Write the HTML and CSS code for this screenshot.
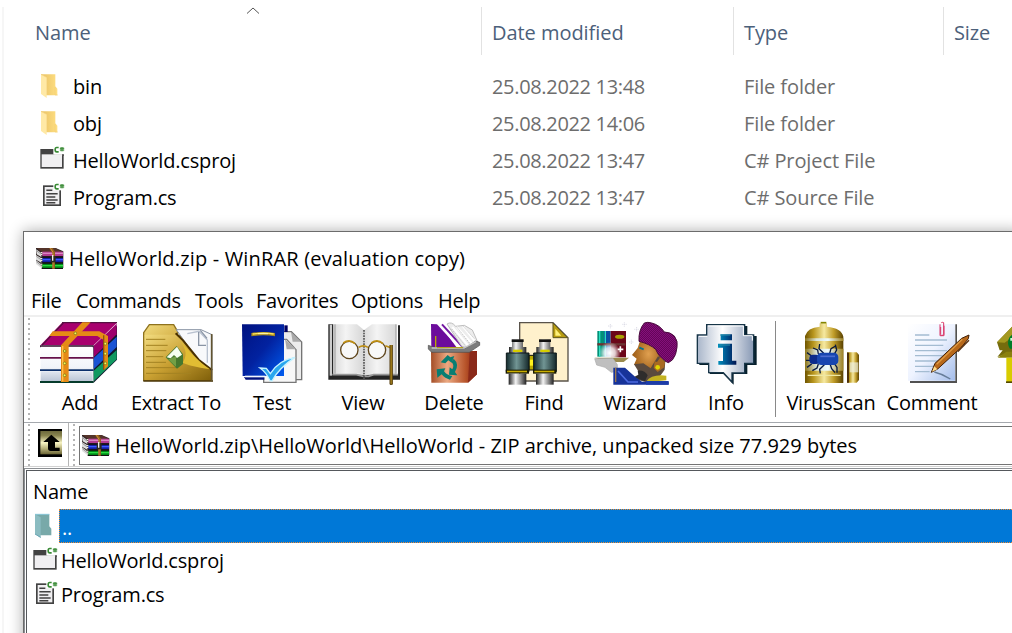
FILE: index.html
```html
<!DOCTYPE html>
<html lang="en">
<head>
<meta charset="utf-8">
<title>HelloWorld.zip - WinRAR</title>
<link rel="stylesheet" href="styles.css">
</head>
<body>
<svg class="defs" width="0" height="0">
  <defs>
    <linearGradient id="gFold" x1="0" x2="1"><stop offset="0" stop-color="#e8c165"/><stop offset="1" stop-color="#ffdf82"/></linearGradient>
    <linearGradient id="gPage" x1="0" y1="0" x2="0" y2="1"><stop offset="0" stop-color="#fff"/><stop offset=".6" stop-color="#f1f4fa"/><stop offset="1" stop-color="#bcc6d6"/></linearGradient>
    <linearGradient id="gGold" x1="0" y1="0" x2="1" y2="1"><stop offset="0" stop-color="#f2dc80"/><stop offset=".5" stop-color="#c9a032"/><stop offset="1" stop-color="#80600a"/></linearGradient>
    <linearGradient id="gBlue" x1="0" y1="0" x2="1" y2="1"><stop offset="0" stop-color="#001280"/><stop offset=".5" stop-color="#0222a0"/><stop offset="1" stop-color="#005cf0"/></linearGradient>
    <linearGradient id="gPaperL" x1="0" x2="1"><stop offset="0" stop-color="#dadada"/><stop offset=".4" stop-color="#f4f4f4"/><stop offset="1" stop-color="#d6d6d6"/></linearGradient>
    <linearGradient id="gBin" x1="0" x2="1"><stop offset="0" stop-color="#a44d26"/><stop offset=".35" stop-color="#eba982"/><stop offset=".75" stop-color="#b8552b"/><stop offset="1" stop-color="#861a0a"/></linearGradient>
    <linearGradient id="gSteel" x1="0" x2="1"><stop offset="0" stop-color="#222"/><stop offset=".4" stop-color="#f4f4f4"/><stop offset="1" stop-color="#222"/></linearGradient>
    <linearGradient id="gTeal" x1="0" x2="1"><stop offset="0" stop-color="#142b2e"/><stop offset=".45" stop-color="#719594"/><stop offset="1" stop-color="#15292b"/></linearGradient>
    <linearGradient id="gCan" x1="0" x2="1"><stop offset="0" stop-color="#6f5500"/><stop offset=".22" stop-color="#b8961e"/><stop offset=".5" stop-color="#f6e9a0"/><stop offset=".75" stop-color="#c09c28"/><stop offset="1" stop-color="#594100"/></linearGradient>
    <linearGradient id="gCanLight" x1="0" x2="1"><stop offset="0" stop-color="#8d761c"/><stop offset=".3" stop-color="#d9e4d9"/><stop offset=".6" stop-color="#eefcff"/><stop offset="1" stop-color="#9d8122"/></linearGradient>
    <linearGradient id="gInfo" x1="0" x2="1"><stop offset="0" stop-color="#a9b6ca"/><stop offset=".45" stop-color="#fff"/><stop offset="1" stop-color="#8899b5"/></linearGradient>
    <linearGradient id="gNote" x1="0" y1="0" x2="1" y2="1"><stop offset="0" stop-color="#fff"/><stop offset=".5" stop-color="#eef3ff"/><stop offset="1" stop-color="#a4bdea"/></linearGradient>
    <linearGradient id="gI" x1="0" x2="1"><stop offset="0" stop-color="#0090bc"/><stop offset=".5" stop-color="#00508c"/><stop offset="1" stop-color="#001450"/></linearGradient>
    <radialGradient id="gFace"><stop offset="0" stop-color="#e0a050"/><stop offset="1" stop-color="#9a5a14"/></radialGradient>
    <radialGradient id="gGlow"><stop offset="0" stop-color="#fff"/><stop offset=".5" stop-color="#fff" stop-opacity=".8"/><stop offset="1" stop-color="#fff" stop-opacity="0"/></radialGradient>
    <pattern id="weave" width="6" height="6" patternUnits="userSpaceOnUse"><rect width="6" height="6" fill="#85107a"/><path d="M0 0h3v3H0zM3 3h3v3H3z" fill="#65045a"/></pattern>
    <linearGradient id="gUp" x1="0" y1="0" x2="0" y2="1"><stop offset="0" stop-color="#6c683c"/><stop offset=".2" stop-color="#89844f"/><stop offset=".5" stop-color="#f8f4c4"/><stop offset=".75" stop-color="#b8b27c"/><stop offset="1" stop-color="#6a6434"/></linearGradient>
  </defs>
  <symbol id="folder" viewBox="0 0 54 78">
    <path d="M3 4h43v36l6 7v20H18L3 60z" fill="url(#gFold)"/>
    <path d="M3 4l17 9v62L3 63z" fill="#ffe9a6"/><path d="M3 4l17 9" stroke="#f3cf77" stroke-width="2"/><path d="M45 42v24h8" fill="none" stroke="#f3cf77" stroke-width="2"/>
  </symbol>
  <symbol id="folder-teal" viewBox="0 0 54 78">
    <path d="M3 4h43v36l6 7v20H18L3 60z" fill="#78a9a9"/><path d="M3 4l17 9v62L3 63z" fill="#8bbcc1"/><path d="M3 4h43" stroke="#87c6d8" stroke-width="3"/><path d="M3 63l17 10" stroke="#6ba6b5" stroke-width="3"/>
  </symbol>
  <symbol id="csharp" viewBox="0 0 32 22">
    <path d="M14 4.5H8Q3.5 4.500 3.500 11Q3.500 17.500 8 17.500H14" fill="none" stroke="#388a34" stroke-width="5"/>
    <path d="M21.500 3v13M26.500 3v13M17.500 7h13.500M17.500 12h13.500" stroke="#388a34" stroke-width="3"/>
  </symbol>
  <symbol id="proj" viewBox="0 0 78 72">
    <path d="M1 9h70v59H1z" fill="#424242"/><path d="M5 25h61v38H5z" fill="#f0eff1"/><path d="M40 0h38v25H40z" fill="#fff"/><path d="M43 25h24v4H43z" fill="#f0eff1"/><path d="M67 25h4v5h-4z" fill="#424242"/>
    <use href="#csharp" x="42" y="0" width="32" height="22"/>
  </symbol>
  <symbol id="source" viewBox="0 0 78 72">
    <path d="M9 7h54v62H9z" fill="#424242"/><path d="M14 12h44v52H14z" fill="#f0eff1"/><path d="M40 0h38v22H40z" fill="#fff"/>
    <path d="M19 22h18M19 32h34M19 42h27M19 51h34M19 59h27" stroke="#424242" stroke-width="4.5"/>
    <use href="#csharp" x="42" y="0" width="32" height="22"/>
  </symbol>
  <symbol id="books" viewBox="0 0 87 66">
    <path d="M3 3h59l23 10v50H22L3 45z" fill="#302525"/>
    <path d="M5 3h56l22 13H22z" fill="#54342a"/><path d="M22 14h62v14H22z" fill="#b23c91"/><path d="M22 17h62v4H22z" fill="#d986c0"/>
    <path d="M22 32h62v14H22z" fill="#1420a5"/><path d="M22 36h62v4H22z" fill="#3b5bff"/><path d="M22 49h62v14H22z" fill="#008616"/><path d="M22 54h62v4H22z" fill="#29dc41"/>
    <path d="M3 7l16 11v12L5 22zM3 24l16 10v13L3 38zM3 40l16 12v11L3 51z" fill="#ddd"/><path d="M4 11l15 11M4 28l15 11M4 44l15 12" stroke="#797979" stroke-width="2"/>
    <path d="M22 28h62v4H22zM22 46h62v4H22zM20 63h64v3H20z" fill="#111"/>
    <path d="M42 3h11l7 12v50h-8V17z" fill="#94601b"/><path d="M46 3l8 13v49" fill="none" stroke="#e3a34e" stroke-width="2"/>
    <path d="M47 27h15v19H47z" fill="#2c2920"/><path d="M53 24v17" stroke="#eee" stroke-width="4"/><path d="M20 15v12M20 33v11M20 50v11" stroke="#f2f2e0" stroke-width="4" stroke-dasharray="3 3"/>
  </symbol>
</svg>

<main class="screen">
  <section class="explorer">
    <svg class="sort" viewBox="0 0 14 8"><path d="M1 6.5L7 1L13 6.5" fill="none" stroke="#555" stroke-width="1"/></svg>
    <div class="cols head"><span>Name</span><span class="w-dm">Date modified</span><span>Type</span><span>Size</span></div>
    <div class="cols row"><span class="file"><svg class="fi"><use href="#folder" width="18" height="26"/></svg>bin</span><span class="date">25.08.2022 13:48</span><span>File folder</span></div>
    <div class="cols row"><span class="file"><svg class="fi"><use href="#folder" width="18" height="26"/></svg>obj</span><span class="date">25.08.2022 14:06</span><span>File folder</span></div>
    <div class="cols row"><span class="file"><svg class="pi"><use href="#proj" width="26" height="24"/></svg>HelloWorld.csproj</span><span class="date">25.08.2022 13:47</span><span>C# Project File</span></div>
    <div class="cols row"><span class="file"><svg class="pi"><use href="#source" width="26" height="24"/></svg>Program.cs</span><span class="date">25.08.2022 13:47</span><span>C# Source File</span></div>
  </section>

  <section class="window">
    <header class="title"><svg class="bk"><use href="#books" width="29" height="22"/></svg><span>HelloWorld.zip - WinRAR (evaluation copy)</span></header>
    <nav class="menu"><span>File</span><span>Commands</span><span>Tools</span><span>Favorites</span><span>Options</span><span>Help</span></nav>
    <div class="toolbar">
      <i class="grip"></i>
      <div class="tool t90"><svg viewBox="45 27 270 192">
        <path d="M220 104L291 41v102l-70 69z" fill="#11172c"/>
        <path d="M221 101L290 35v32l-69 69z" fill="#9c006c"/><path d="M221 138L290 74v31l-69 67z" fill="#1953d4"/><path d="M221 176L290 114v28l-69 66z" fill="#109960"/>
        <path d="M62 99L126 32h165l-70 68z" fill="#a8006e"/><path d="M60 100h161v6H60z" fill="#2d0c2b"/>
        <path d="M62 104h156v31H62zM62 141h156v31H62zM62 178h156v29H62z" fill="url(#gPage)"/>
        <path d="M60 135h161v5H60z" fill="#65104b"/><path d="M60 172h161v5H60z" fill="#0d306b"/><path d="M60 207h161v6H60z" fill="#063b2b"/>
        <path d="M66 100L130 33M126 32h165" stroke="#551042" stroke-width="4" fill="none"/>
        <path d="M123 100L187 31h25l-66 69v110h-23z" fill="#e58b16"/><path d="M98 58h140l26 14v91l-13 12V84l-19-12H88z" fill="#e58b16"/><path d="M128 102v106" stroke="#ffc14b" stroke-width="4"/>
        <path d="M251 70v104" stroke="#8e5110" stroke-width="4"/><g fill="#fff35b" stroke="#64720d" stroke-width="2"><circle cx="134" cy="117" r="4"/><circle cx="134" cy="154" r="4"/><circle cx="134" cy="190" r="4"/><circle cx="166" cy="64" r="4"/><circle cx="256" cy="95" r="4"/><circle cx="256" cy="125" r="4"/><circle cx="256" cy="154" r="4"/></g>
      </svg><span>Add</span></div>
      <div class="tool t102"><svg viewBox="315 27 306 192">
        <path d="M371 205V62l17-24h73l12 20v14h46l56 100v33z" fill="url(#gGold)" stroke="#8e721e" stroke-width="4"/>
        <path d="M469 53h74l33 15v107l-45-34z" fill="#f8f9fb" stroke="#8994a4" stroke-width="3"/><path d="M502 65l35-7 25 26v68" fill="none" stroke="#b9c2d0" stroke-width="4"/><path d="M536 60v40h22M541 55l20 24" fill="none" stroke="#8994a4" stroke-width="4"/>
        <path d="M374 68h94l24 22 20 32 22 22 40 31v29H374z" fill="url(#gGold)"/>
        <path d="M378 82h58M378 100h65M378 116h61M378 134h52M378 151h60M378 167h92M378 184h135" stroke="#a38222" stroke-width="3"/>
        <path d="M467 64l22 21 25 31 22 27 40 31" fill="none" stroke="#493000" stroke-width="6"/><path d="M474 79c20 25 32 45 14 73 31 13 57 15 82 20-35-22-65-58-96-93z" fill="#e1bd33"/>
        <path d="M437 136l33-34 19 25v29l-18 14z" fill="#46782e"/><path d="M440 136l31-32 15 24-15 10-9-9-10 10z" fill="#f6fff0"/><path d="M444 142l24-9v31z" fill="#729f45"/><path d="M370 207h209" stroke="#483407" stroke-width="5"/><path d="M575 66v142" stroke="#625431" stroke-width="5"/>
      </svg><span class="w-ex">Extract To</span></div>
      <div class="tool t90"><svg viewBox="-9 27 270 192">
        <path d="M140 59h44l31 31v113h-45z" fill="#ececec" stroke="#747474" stroke-width="4"/><path d="M101 82h69l28 31v98h-97z" fill="#f7f7f7" stroke="#777" stroke-width="4"/><path d="M165 82l5 30h28zM183 60l5 29h25z" fill="#aaa"/>
        <path d="M36 37h126v155H38z" fill="url(#gBlue)"/><path d="M163 40h10v20h-10z" fill="#000062"/><path d="M42 195h61v8H47z" fill="#00107a"/><path d="M45 191h61v5H45z" fill="#f1f7ff"/>
        <path d="M64 63q35-6 71 0v10q-35-6-71 0z" fill="#a88a20"/><path d="M68 66q33-5 63 0" fill="none" stroke="#ffe65a" stroke-width="4"/><path d="M84 65h30" stroke="#fff8b2" stroke-width="3"/>
        <path d="M90 168l19 1 12 16c14-23 37-43 74-49-29 19-53 40-69 71l-6-1c-8-17-17-29-30-38z" fill="#28a6ee" stroke="#c5f2ff" stroke-width="4"/>
      </svg><span>Test</span></div>
      <div class="tool t92"><svg viewBox="261 27 276 192">
        <path d="M295 37h15v151h200v15H295zM504 40h6v156h-6z" fill="#242424"/><path d="M299 38h7v153h-7z" fill="#ccc"/>
        <path d="M311 37h70l21 17v135l-12-4h-79z" fill="url(#gPaperL)"/><path d="M402 54l24-17h73v149h-77l-20 6z" fill="url(#gPaperL)"/><path d="M307 188h72l21 5h16l15-5h73" fill="none" stroke="#999" stroke-width="5"/><path d="M402 54v151" stroke="#555" stroke-width="5" stroke-dasharray="5 3"/>
        <path d="M315 37v148M498 37v148" stroke="#999" stroke-width="3"/>
        <circle cx="358" cy="114" r="26" fill="#f8f8f8" stroke="#5f461d" stroke-width="4"/><circle cx="441" cy="114" r="26" fill="#f8f8f8" stroke="#5f461d" stroke-width="4"/><path d="M340 93q18-14 35 2M424 93q18-14 35 2M386 106q14-9 28 0M466 101l18 7" fill="none" stroke="#bd8d12" stroke-width="5"/><path d="M480 99v118h7V99" fill="#a8841c" stroke="#543d0e" stroke-width="3"/>
      </svg><span>View</span></div>
      <div class="tool t90"><svg viewBox="-18 27 270 192">
        <path d="M48 36l18 1 65 71H49z" fill="#6c0c9c"/><path d="M76 39h32l45 69h-27z" fill="#fff"/><path d="M81 37l65 71" stroke="#7317a2" stroke-width="6"/><path d="M96 36q13-9 26 7l26-3 24 14 16 36-22 18-25-4z" fill="#ededed" stroke="#bdbdbd" stroke-width="3"/><path d="M112 45l46 54M125 45l47 51M144 43l34 43" stroke="#fff" stroke-width="6"/><path d="M110 51l43 53M126 46l38 48M145 43l33 37" stroke="#aaa" stroke-width="2" stroke-dasharray="5 3"/><path d="M62 72v35" stroke="#b8a900" stroke-width="4"/>
        <path d="M48 117h138v70l-27 25H49z" fill="url(#gBin)"/><path d="M164 119h22v68l-27 25z" fill="#8a2919"/>
        <path d="M40 100q32 16 111 8l31-21 12 4v9l-31 21H50l-10-10z" fill="#7b7b7b" stroke="#4b4b4b" stroke-width="2"/><path d="M50 108h97l36-19" fill="none" stroke="#c7c7c7" stroke-width="4"/><path d="M66 107h78" stroke="#b0a000" stroke-width="3"/>
        <path d="M77 151l21-22 8 7 12-4-8 20-10-7-9 9zM116 140q18 16 4 40l7 10-25-2 2-22 8 6q7-12-2-21zM65 172l26-3-4 9q10 13 25 14l-7 11q-15-3-25-16l-13 10z" fill="#087e72"/>
      </svg><span>Delete</span></div>
      <div class="tool t90"><svg viewBox="252 27 270 192">
        <path d="M314 32h100l45 45v130H314z" fill="#fff1cc" stroke="#59534a" stroke-width="4"/><path d="M414 33l43 44h-43z" fill="#b89c10" stroke="#5b531f" stroke-width="3"/><path d="M421 50l18 21h-18z" fill="#fff179"/>
        <path d="M342 130h17v44h-17z" fill="#b9a900" stroke="#111" stroke-width="3"/><path d="M344 143h12v18h-12z" fill="#fff31d"/>
        <g id="tube"><path d="M291 83h33v22h10v21H282v-21h9z" fill="url(#gSteel)"/><path d="M290 82h36v8h-36z" fill="#111"/><path d="M294 113h28v7h-28z" fill="#d6ce00"/><path d="M274 123h68v56h-68z" fill="url(#gTeal)" stroke="#0c1718" stroke-width="3"/><path d="M272 173h70v12h-70z" fill="#171700"/><path d="M276 176h60v5h-60z" fill="#c9ad00"/><path d="M281 185h53v33h-53z" fill="url(#gSteel)"/></g><use href="#tube" x="82"/>
      </svg><span>Find</span></div>
      <div class="tool t92"><svg viewBox="12 27 276 192">
        <g fill="none" stroke="#dcdce6" stroke-width="3" stroke-dasharray="3 2"><path d="M76 36v13M69 42h14M118 31v13M112 37h14M155 45v13M148 52h14M139 83v13M132 90h14"/></g>
        <path d="M37 57h20v77H37z" fill="#039078"/><path d="M57 57h20v77H57z" fill="#0d4fa1"/><path d="M77 57h46v79H77z" fill="#6b0618"/><path d="M44 57v77M61 57v77" stroke="#28dfbf" stroke-width="4"/><path d="M37 97h84" stroke="#6c3433" stroke-width="7"/><ellipse cx="104" cy="74" rx="14" ry="6" fill="#aaa000"/><circle cx="74" cy="123" r="33" fill="url(#gGlow)"/>
        <path d="M28 137h104l-16 13H70z" fill="#9a8b4d"/><path d="M29 140l55-1 13 19v20l-18 3-19-15-25-7z" fill="#bfbfbf" stroke="#aaa" stroke-width="2"/><path d="M106 103v18M98 112h17" stroke="#fff" stroke-width="5"/>
        <path d="M166 84l-8 24-17 21 14 11-8 18 20 8 36 24 22-10 15-42-18-34-53-42z" fill="url(#gFace)"/>
        <path d="M178 33q10-4 22 0 24 6 38 27 18 0 30 12 12 16 8 34-2 24-14 38l-12 8q-24-8-38-40-18-16-50-24-2-34 16-55z" fill="url(#weave)" stroke="#480a3d" stroke-width="3"/>
        <path d="M147 157l28-3 22 15 8-14 14-22 22 14-2 26-16 22-38 16-38-10 20-12z" fill="#5a4a3e"/><path d="M158 176q22-2 30 14l-8 18-34-12 14-8z" fill="#2e2c2c"/><path d="M209 148l-3 20 12 12 20-14 2-16-14-14-10 14z" fill="#a86a22"/>
        <path d="M85 218v-51h35l31 28 20 14h80v9z" fill="#173399"/><path d="M99 177l30 33h30" stroke="#4c6be0" stroke-width="5" fill="none"/><path d="M183 209q18-24 61-18v14q-30 2-61 8z" fill="#c3b221"/><path d="M183 207h68v11h-68z" fill="#1c3ca8"/><path d="M92 167v43" stroke="#9b794e" stroke-width="4"/><path d="M163 107l13 5" stroke="#06738e" stroke-width="6"/><circle cx="218" cy="166" r="7" fill="#e0d700"/>
      </svg><span>Wizard</span></div>
      <div class="tool t90"><svg viewBox="288 27 270 192">
        <path d="M370 42h117v30h28v87h-28v27H446v32l-31-32h-41v-27h-31V72h27z" fill="#061f2b"/>
        <path d="M365 38h114v31h27v85h-27v29h-38v27l-26-28h-44v-28h-34V69h28z" fill="url(#gInfo)" stroke="#173548" stroke-width="4"/><path d="M369 42h106v29h27v15M342 73h25" fill="none" stroke="#fff" stroke-width="3"/>
        <path d="M407 67h34v18h-34zM399 95h42v51h13v12h-54v-11h14v-40h-15z" fill="url(#gI)"/><path d="M405 69h31M403 99h32" stroke="#2e90ac" stroke-width="3"/>
      </svg><span>Info</span></div>
      <i class="divider"></i>
      <div class="tool t102"><svg viewBox="45 27 306 192">
        <path d="M164 34h22v10q44 4 49 30v139H120V72q7-25 44-28z" fill="url(#gCan)"/><path d="M120 79h115v8H120zM120 110h115v66H120z" fill="url(#gCanLight)"/><path d="M128 190h99" stroke="#efe8a3" stroke-width="4"/><path d="M167 32h17" stroke="#858500" stroke-width="5"/>
        <path d="M246 121h29l7 7v76l-7 8h-29z" fill="url(#gCan)"/><path d="M254 151h26v30h-26z" fill="#edf0df" opacity=".7"/><path d="M249 122v90" stroke="#42260b" stroke-width="5"/>
        <g fill="none" stroke="#07183e" stroke-width="4"><path d="M140 132l-14-10M136 145h-13M140 156l-14 10M160 126l-2-12-14-6M176 124l-14-14 2-14M194 124l4-14 14-8M207 128l8-14-4-16M160 156l-4 12-14 8M178 158l-14 14 2 12M196 158l4 12 10 12M208 154l8 12 0 16"/></g><rect x="133" y="128" width="31" height="28" rx="11" fill="#0b2b8b"/><rect x="156" y="122" width="64" height="37" rx="13" fill="#1746b0"/><path d="M166 133h44" stroke="#4a6cd0" stroke-width="5"/>
      </svg><span class="w-vs">VirusScan</span></div>
      <div class="tool t100"><svg viewBox="351 27 300 192">
        <path d="M435 207h136V37h5v176H435z" fill="#515151"/><path d="M429 36h141v170H429z" fill="url(#gNote)"/><path d="M450 69h43M450 84h96M450 100h85M450 116h96M450 131h83M450 147h80M450 163h70M450 179h44" stroke="#a4bcd2" stroke-width="4"/>
        <path d="M527 45v22q2 7 9 1V32q-4-2-7 0M525 37v34h12V41" fill="none" stroke="#d93769" stroke-width="3"/>
        <path d="M508 180q25 6 48 21" stroke="#667c98" stroke-width="4" fill="none"/><path d="M499 181l11-27 80-75 22-10-2 11-20 25-72 66z" fill="#b7681a" stroke="#412008" stroke-width="3"/><path d="M515 157l77-75" stroke="#dd9a44" stroke-width="4"/><path d="M578 119l34-34" stroke="#5a3110" stroke-width="4"/><path d="M501 179l7-16 9 9z" fill="#ffdc8b"/>
      </svg><span class="w-cm">Comment</span></div>
      <div class="tool t50"><svg viewBox="651 27 150 192">
        <path d="M696 91l45-47v80l-18 2-26 9 16-20h-9z" fill="#756c0d"/><path d="M696 91l45-47v32l-22 16z" fill="#a49920"/><path d="M698 137l26-18h17v18z" fill="#8a800e"/><path d="M724 137h17v75h-17z" fill="#d8cc00"/><path d="M723 208h18v5h-18z" fill="#524900"/><path d="M730 84q0-8 11-16v42h-6q-8-10-5-26z" fill="#007c28"/><path d="M736 78h6v8h-6z" fill="#c9ffd5"/>
      </svg></div>
    </div>
    <div class="address">
      <i class="grip"></i>
      <div class="upcell"><svg viewBox="0 0 72 84"><path d="M0 0h72v84H0z" fill="#000"/><path d="M7 6h65v70H7z" fill="url(#gUp)"/><path d="M40 17L65 39H51v17h14v10H38q-8 0-8-8V39H16z" fill="#000"/></svg></div>
      <i class="grip g2"></i>
      <div class="path"><svg class="bk"><use href="#books" width="29" height="22"/></svg><span>HelloWorld.zip\HelloWorld\HelloWorld - ZIP archive, unpacked size 77.929 bytes</span></div>
    </div>
    <div class="listing"><div class="list">
      <div class="lhead">Name</div>
      <div class="lrow"><svg class="lf"><use href="#folder-teal" width="18" height="26"/></svg><span class="sel">..</span></div>
      <div class="lrow"><svg class="lp"><use href="#proj" width="26" height="24"/></svg><span class="lname">HelloWorld.csproj</span></div>
      <div class="lrow"><svg class="lp"><use href="#source" width="26" height="24"/></svg><span class="lname">Program.cs</span></div>
    </div></div>
  </section>
</main>
</body>
</html>
```
FILE: styles.css
```css
* { box-sizing: border-box; }
body { margin: 0; background: #fff; font-family: "Open Sans", "Noto Sans", sans-serif; font-size: 20px; line-height: 28px; letter-spacing: -0.18px; color: #000; }
.defs { position: absolute; }
svg { display: block; flex: none; }
.screen { width: 1012px; height: 633px; overflow: hidden; display: flex; flex-direction: column; }

.explorer { position: relative; flex: none; height: 626px; margin: 7px 0 0 2px; padding-left: 1px; border-left: 2px solid #f6f6f6; }
.sort { position: absolute; left: 242px; top: 0; width: 14px; height: 8px; }
.cols { display: grid; grid-template-columns: 476px 252px 210px 69px; height: 37px; align-items: center; color: #6d6d6d; white-space: nowrap; letter-spacing: -0.1px; }
.cols > span + span { padding-left: 11px; }
.cols.head { height: 48px; margin-bottom: 13px; color: #4c607a; align-items: stretch; line-height: 52px; }
.head > span { height: 48px; }
.head > .w-dm { letter-spacing: -0.05px; }
.head > span:first-child { padding-left: 30px; }
.head > span + span { border-left: 1px solid #e2e2e2; padding-left: 10px; }
.cols .date { letter-spacing: -0.33px; }
.file { display: flex; align-items: center; padding-left: 35px; color: #000; letter-spacing: -0.18px; }
.fi { width: 18px; height: 26px; margin: -3px 15px 0 0; }
.pi { width: 26px; height: 24px; margin: -6px 7px 0 0; }
.row > span { padding-top: 1px; }

.window { flex: none; position: relative; margin: -402px 0 0 23px; width: 1000px; height: 420px; border: 1px solid #6c6c6c; background: #fff; box-shadow: 0 0 14px rgba(0,0,0,.33); white-space: nowrap; }
.title { display: flex; align-items: center; height: 54px; padding-left: 11px; letter-spacing: 0.17px; }
.bk { width: 29px; height: 22px; margin-right: 5px; margin-top: -2px; }
.menu { display: grid; grid-template-columns: 45px 119px 61px 95px 87px 60px; height: 31px; padding-left: 7px; align-items: center; border-bottom: 2px solid #efefef; letter-spacing: -0.27px; }
.toolbar { display: flex; height: 106px; border-bottom: 1px solid #a5a9ae; }
.grip { flex: none; width: 2px; margin: 1px 5px 0 4px; background: repeating-linear-gradient(#b5b5b5 0 2px, #fff 2px 5px); }
.tool { flex: none; display: flex; flex-direction: column; align-items: center; padding-top: 4px; }
.tool svg { width: 100%; height: 64px; }
.tool span { line-height: 28px; margin-top: 4px; }
.tool .w-ex { letter-spacing: -0.3px; }
.t90 { width: 90px; } .t92 { width: 92px; } .t100 { width: 100px; } .t102 { width: 102px; } .t50 { width: 50px; }
.divider { flex: none; width: 1px; background: #898989; margin: 4px 4px 5px 4px; }

.address { display: flex; height: 44px; border-bottom: 1px solid #d2d2d2; }
.upcell { flex: none; width: 34px; padding: 6px 0 0 3px; border-right: 1px solid #b5b5b5; }
.upcell svg { width: 24px; height: 28px; }
.g2 { margin-right: 4px; }
.path { flex: 1; display: flex; align-items: center; margin: 3px 0 1px; border: 1px solid #747474; padding-left: 1px; padding-top: 1px; letter-spacing: -0.005px; }
.listing { height: 190px; margin-top: 1px; border: 1px solid #8c8f93; border-right: 0; padding: 1px 0 0 1px; }
.list { height: 187px; border: 1px solid #55585c; border-right: 0; }
.lhead { height: 38px; padding: 7px 0 0 6px; }
.lrow { display: flex; height: 34px; padding-left: 6px; align-items: center; }
.lf { width: 18px; height: 26px; margin: 0 7px 0 1px; }
.lp { width: 26px; height: 24px; margin: -3px 2px 0 0; }
.lname { padding-top: 2px; }
.sel { flex: 1; height: 34px; background: #0078d7; color: #fff; border: 1px dotted #f08a31; padding-left: 2px; line-height: 36px; }
```
